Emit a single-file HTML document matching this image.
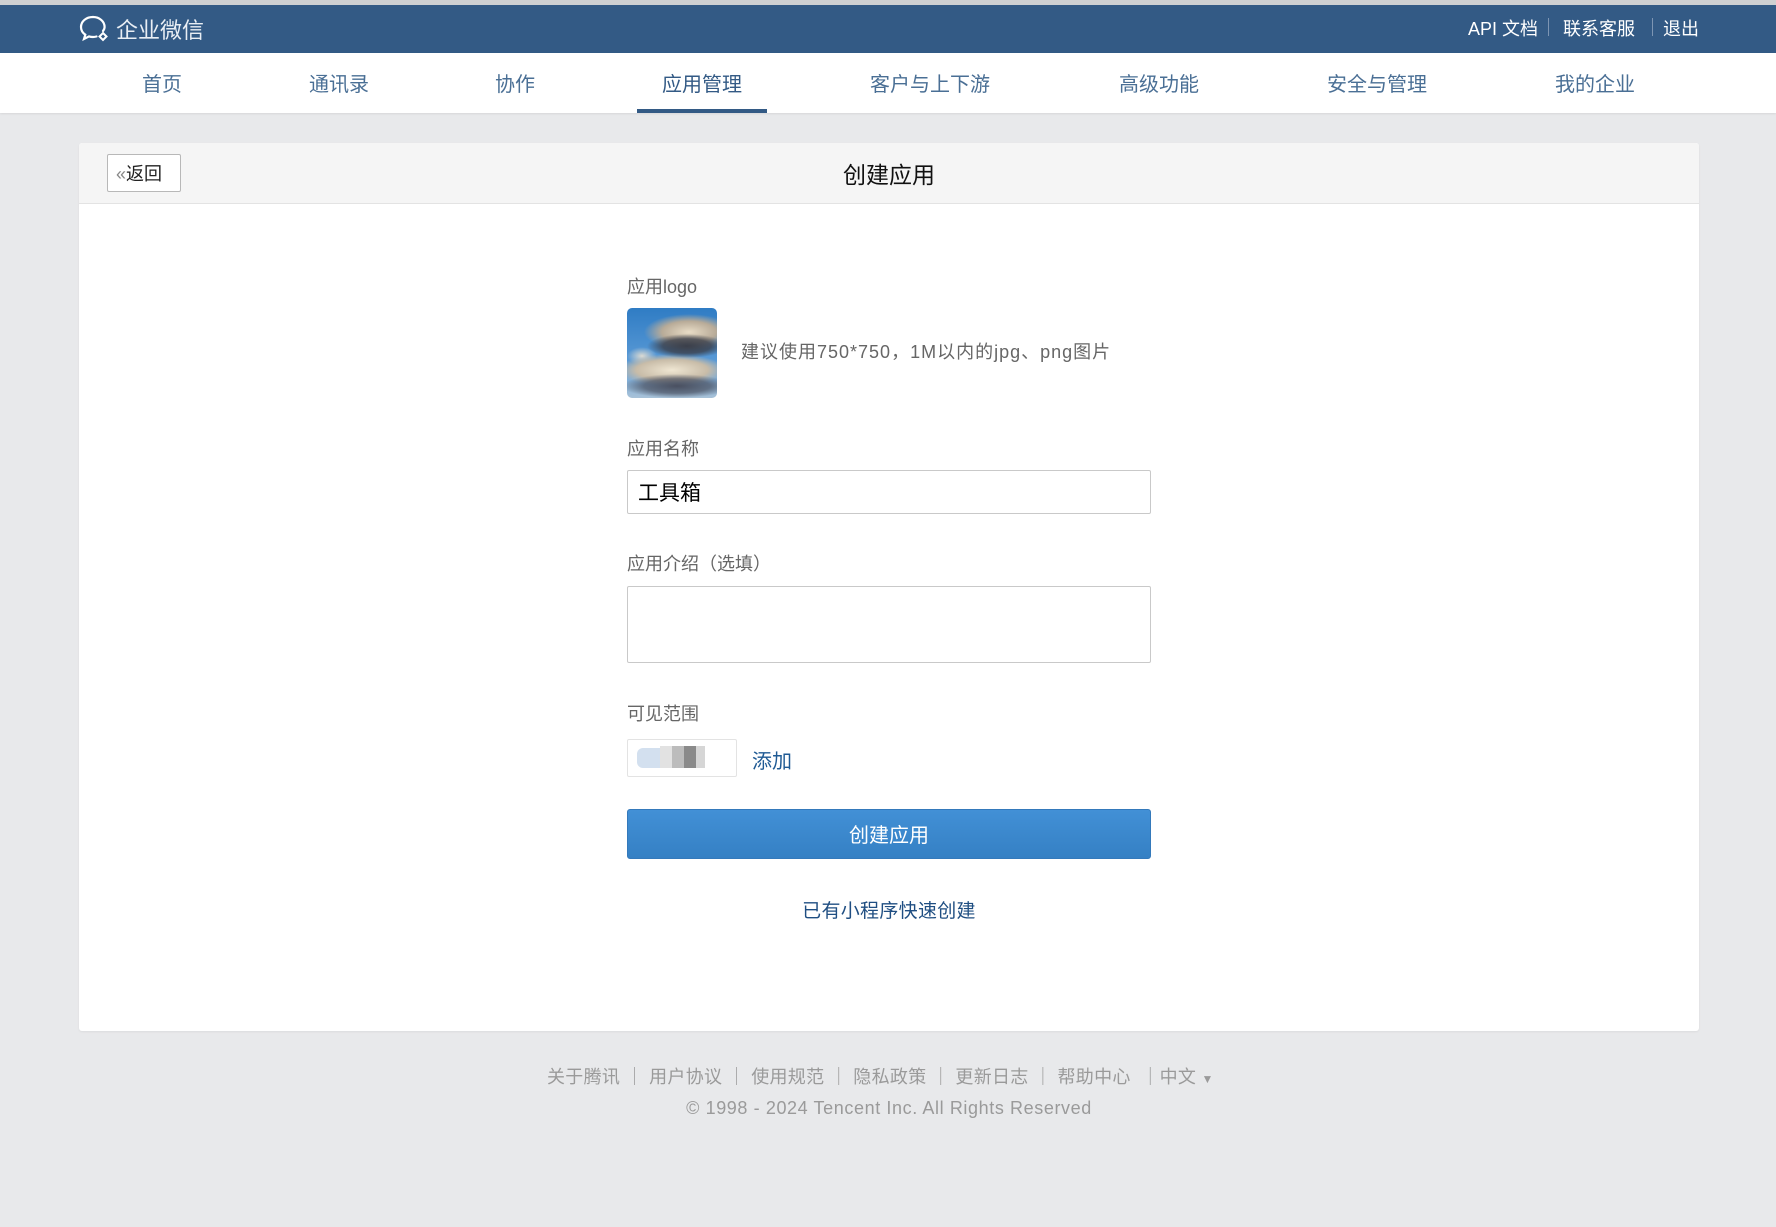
<!DOCTYPE html>
<html><head><meta charset="utf-8">
<style>
*{margin:0;padding:0;box-sizing:border-box}
body{width:1776px;height:1227px;background:#e8e9eb;font-family:"Liberation Sans","Noto Sans CJK SC",sans-serif;position:relative;overflow:hidden}
.a{position:absolute;white-space:nowrap}
.top{left:0;top:0;width:1776px;height:5px;background:#cfd0d2}
.hd{left:0;top:5px;width:1776px;height:48px;background:#335a85}
.nav{left:0;top:53px;width:1776px;height:60px;background:#fff;box-shadow:0 1px 2px rgba(0,0,0,.08)}
.ni{top:68px;font-size:20px;color:#4a6f95;transform:translateX(-50%)}
.hr{top:15px;font-size:18px;color:#fff}
.sep{top:18px;width:1px;height:18px;background:#7d95b3}
.card{left:79px;top:143px;width:1620px;height:888px;background:#fff;border-radius:3px;box-shadow:0 1px 2px rgba(0,0,0,.06)}
.ch{left:79px;top:143px;width:1620px;height:61px;background:#f5f5f5;border-bottom:1px solid #e3e3e3;border-radius:3px 3px 0 0}
.lbl{font-size:18px;color:#666;left:627px}
.box{left:627px;width:524px;border:1px solid #c9c9c9;border-radius:2px;background:#fff}
.ft{top:1063px;font-size:18px;color:#9a9a9a}
</style></head><body>
<div class="a top"></div>
<div class="a hd"></div>
<svg class="a" style="left:79px;top:14px" width="34" height="30" viewBox="0 0 34 30"><path d="M14 3C7 3 2 7.5 2 13c0 3.2 1.7 5.9 4.3 7.7L5 25l5-2.6c1.3.4 2.6.6 4 .6 1.2 0 2.4-.2 3.5-.5" fill="none" stroke="#fff" stroke-width="2.2" stroke-linecap="round"/><path d="M24 17c1-1.2 1.6-2.6 1.6-4C25.6 7.5 20.5 3 14 3" fill="none" stroke="#fff" stroke-width="2.2" stroke-linecap="round"/><path d="M24 19l3.5 3.5L24 26l-3.5-3.5z" fill="none" stroke="#fff" stroke-width="2"/></svg>
<div class="a" style="left:116px;top:13px;font-size:22px;color:#e9eef4">企业微信</div>
<div class="a hr" style="left:1468px">API 文档</div>
<div class="a sep" style="left:1548px"></div>
<div class="a hr" style="left:1563px">联系客服</div>
<div class="a sep" style="left:1652px"></div>
<div class="a hr" style="left:1663px">退出</div>
<div class="a nav"></div>
<div class="a ni" style="left:162px">首页</div>
<div class="a ni" style="left:339px">通讯录</div>
<div class="a ni" style="left:515px">协作</div>
<div class="a ni" style="left:702px;color:#335a85">应用管理</div>
<div class="a" style="left:637px;top:109px;width:130px;height:4px;background:#335a85"></div>
<div class="a ni" style="left:930px">客户与上下游</div>
<div class="a ni" style="left:1159px">高级功能</div>
<div class="a ni" style="left:1377px">安全与管理</div>
<div class="a ni" style="left:1595px">我的企业</div>

<div class="a card"></div>
<div class="a ch"></div>
<div class="a" style="left:107px;top:154px;width:74px;height:38px;border:1px solid #b8b8b8;border-radius:2px;background:#fff;font-size:18px;color:#222;padding:5px 0 0 8px"><span style="color:#888">«</span>返回</div>
<div class="a" style="left:889px;top:156px;transform:translateX(-50%);font-size:23px;color:#111">创建应用</div>

<div class="a lbl" style="top:273px">应用logo</div>
<div class="a" style="left:627px;top:308px;width:90px;height:90px;border-radius:5px;overflow:hidden;background:
radial-gradient(ellipse 40px 12px at 60px 38px,#3b3f4a 0%,rgba(59,63,74,.8) 60%,transparent 100%),
radial-gradient(ellipse 45px 18px at 62px 24px,#e8dcc6 0%,#b8ab98 60%,transparent 100%),
radial-gradient(ellipse 55px 12px at 50px 78px,#4a5060 0%,rgba(74,80,96,.7) 60%,transparent 100%),
radial-gradient(ellipse 55px 16px at 45px 62px,#efe6d2 0%,#c8bca8 65%,transparent 100%),
radial-gradient(ellipse 15px 9px at 15px 48px,#dcdad2 0%,transparent 100%),
linear-gradient(#2f7cc4,#5a9ad6 60%,#a8c2d8)"></div>
<div class="a" style="left:741px;top:338px;font-size:18px;color:#666;letter-spacing:1px">建议使用750*750，1M以内的jpg、png图片</div>

<div class="a lbl" style="top:435px">应用名称</div>
<div class="a box" style="top:470px;height:44px"></div>
<div class="a" style="left:638px;top:477px;font-size:21px;color:#000">工具箱</div>

<div class="a lbl" style="top:550px">应用介绍（选填）</div>
<div class="a box" style="top:586px;height:77px"></div>

<div class="a lbl" style="top:700px">可见范围</div>
<div class="a" style="left:627px;top:739px;width:110px;height:38px;border:1px solid #e3e3e3;border-radius:2px;background:#fff"></div>
<div class="a" style="left:637px;top:748px;width:23px;height:20px;background:#d3e0ef;border-radius:6px 0 0 6px"></div>
<div class="a" style="left:660px;top:746px;width:12px;height:22px;background:#e2e2e2"></div>
<div class="a" style="left:672px;top:746px;width:12px;height:22px;background:#bcbcbc"></div>
<div class="a" style="left:684px;top:746px;width:12px;height:22px;background:#8a8a8a"></div>
<div class="a" style="left:696px;top:746px;width:9px;height:22px;background:#d6d6d6"></div>
<div class="a" style="left:752px;top:745px;font-size:20px;color:#1f5a94">添加</div>

<div class="a" style="left:627px;top:809px;width:524px;height:50px;border-radius:3px;background:linear-gradient(#4290d6,#3580c4);border:1px solid #3479bb"></div>
<div class="a" style="left:889px;top:819px;transform:translateX(-50%);font-size:20px;color:#fff">创建应用</div>
<div class="a" style="left:889px;top:896px;transform:translateX(-50%);font-size:19px;color:#1f4e82;letter-spacing:0.3px">已有小程序快速创建</div>

<div class="a ft" style="left:547px;letter-spacing:0.3px">关于腾讯 ｜ 用户协议 ｜ 使用规范 ｜ 隐私政策 ｜ 更新日志 ｜ 帮助中心 &nbsp;｜中文 <span style="font-size:12px">▼</span></div>
<div class="a ft" style="left:889px;top:1098px;transform:translateX(-50%);letter-spacing:0.6px">© 1998 - 2024 Tencent Inc. All Rights Reserved</div>
</body></html>
